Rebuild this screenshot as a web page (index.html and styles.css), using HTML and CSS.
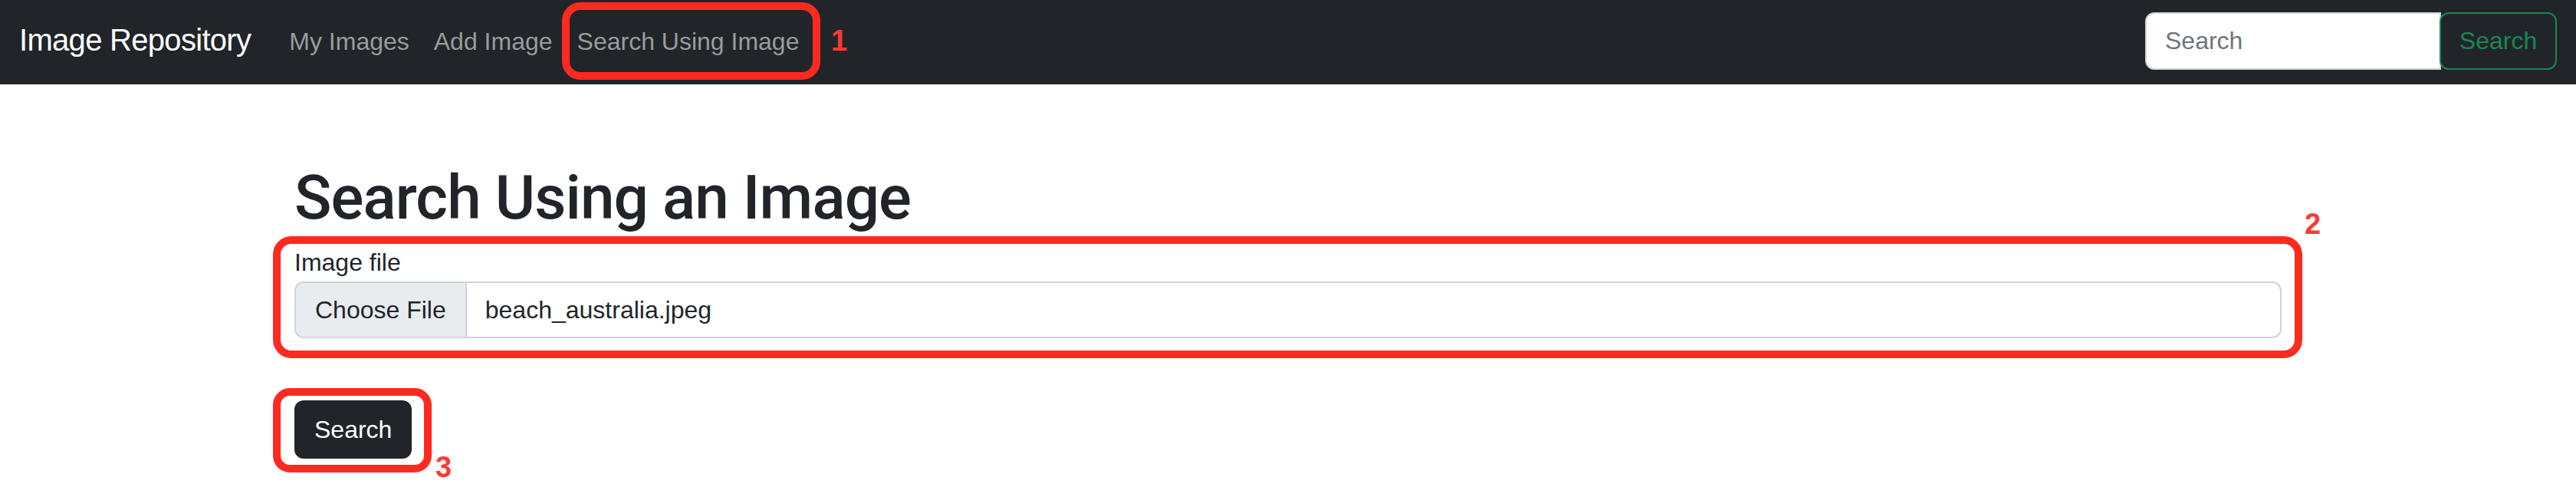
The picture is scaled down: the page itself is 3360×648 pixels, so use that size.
FILE: index.html
```html
<!DOCTYPE html>
<html lang="en">
<head>
<meta charset="utf-8">
<title>Search Using an Image</title>
<link rel="stylesheet" href="styles.css">
</head>
<body>
<nav class="navbar">
  <a class="brand" href="#">Image Repository</a>
  <ul class="nav-links">
    <li><a href="#">My Images</a></li>
    <li><a href="#">Add Image</a></li>
    <li><a href="#">Search Using Image</a></li>
  </ul>
  <form class="nav-search">
    <div class="nav-input">Search</div>
    <div class="nav-btn">Search</div>
  </form>
</nav>

<main class="container">
  <h1 class="title">Search Using an Image</h1>
  <label class="field-label">Image file</label>
  <div class="file-input">
    <span class="file-btn">Choose File</span>
    <span class="file-name">beach_australia.jpeg</span>
  </div>
  <div class="submit-btn">Search</div>
</main>

<div class="anno anno-1"></div>
<div class="anno anno-2"></div>
<div class="anno anno-3"></div>
<span class="anno-num num-1">1</span>
<span class="anno-num num-2">2</span>
<span class="anno-num num-3">3</span>
</body>
</html>
```

FILE: styles.css
```css
* { box-sizing: border-box; }

html, body {
  margin: 0;
  padding: 0;
  background: #ffffff;
  font-family: "Liberation Sans", Arial, sans-serif;
  color: #212529;
}

.navbar {
  height: 110px;
  background: #212529;
  display: flex;
  align-items: center;
  padding: 16px 25px 19px 25px;
}

.brand {
  font-size: 40px;
  line-height: 60px;
  color: #ffffff;
  text-decoration: none;
  letter-spacing: -0.7px;
  margin-right: 34px;
  margin-bottom: 3px;
}

.nav-links {
  list-style: none;
  display: flex;
  margin: 0;
  padding: 0;
}

.nav-links a {
  display: block;
  padding: 0 16px;
  font-size: 32px;
  line-height: 48px;
  color: #9a9b9d;
  text-decoration: none;
}

.nav-search {
  margin: 0 0 0 auto;
  display: flex;
  height: 75px;
}

.nav-input {
  width: 386px;
  height: 75px;
  background: #ffffff;
  border: 2px solid #ced4da;
  border-radius: 12px 0 0 12px;
  padding-left: 24px;
  font-size: 32px;
  line-height: 71px;
  color: #6c757d;
}

.nav-btn {
  width: 153px;
  height: 75px;
  margin-left: -2px;
  border: 2px solid #198754;
  border-radius: 12px;
  font-size: 32px;
  line-height: 71px;
  color: #198754;
  text-align: center;
}

.container {
  width: 2592px;
  margin: 0 auto;
  padding-top: 100px;
}

.title {
  margin: 0 0 12px 0;
  font-family: Roboto, "Liberation Sans", sans-serif;
  font-weight: 500;
  font-size: 80px;
  line-height: 96px;
  letter-spacing: -0.9px;
  color: #212529;
}

.field-label {
  display: block;
  font-size: 32px;
  line-height: 48px;
  margin-bottom: 1px;
}

.file-input {
  display: flex;
  height: 74px;
  border: 2px solid #ced4da;
  border-radius: 12px;
  overflow: hidden;
  font-size: 32px;
}

.file-btn {
  display: flex;
  align-items: center;
  padding: 0 25px 0 25px;
  background: #e9ecef;
  border-right: 2px solid #ced4da;
  color: #212529;
}

.file-name {
  display: flex;
  align-items: center;
  padding-left: 24px;
  color: #212529;
}

.submit-btn {
  display: inline-block;
  margin-top: 81px;
  height: 76px;
  padding: 0 26px;
  background: #212529;
  color: #ffffff;
  border-radius: 12px;
  font-size: 32px;
  line-height: 76px;
}

.anno {
  position: absolute;
  border: 10px solid #fe2a1f;
  border-radius: 24px;
}

.anno-1 { left: 733px; top: 3px; width: 337px; height: 101px; }
.anno-2 { left: 356px; top: 308px; width: 2647px; height: 159px; }
.anno-3 { left: 356px; top: 506px; width: 207px; height: 110px; border-radius: 22px; }

.anno-num {
  position: absolute;
  font-family: "Liberation Sans", Arial, sans-serif;
  font-weight: 700;
  font-size: 38px;
  line-height: 38px;
  color: #fb3a35;
}

.num-1 { left: 1084px; top: 34px; }
.num-2 { left: 3006px; top: 273px; }
.num-3 { left: 568px; top: 590px; }
```
